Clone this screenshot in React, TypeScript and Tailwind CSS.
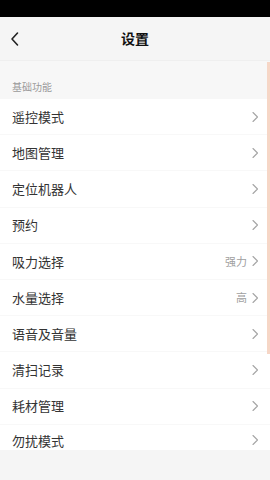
import React from "react";

const rows: { label: string; value?: string }[] = [
  { label: "遥控模式" },
  { label: "地图管理" },
  { label: "定位机器人" },
  { label: "预约" },
  { label: "吸力选择", value: "强力" },
  { label: "水量选择", value: "高" },
  { label: "语音及音量" },
  { label: "清扫记录" },
  { label: "耗材管理" },
  { label: "勿扰模式" },
];

function Chevron() {
  return (
    <svg width="8" height="12" viewBox="0 0 8 12" fill="none">
      <path d="M2 1.5 L6.5 6 L2 10.5" stroke="#a5a5a5" strokeWidth="1.1" strokeLinecap="round" strokeLinejoin="round" />
    </svg>
  );
}

export default function App() {
  return (
    <div
      className="w-[270px] h-[480px] flex flex-col bg-[#f5f5f5] overflow-hidden"
      style={{ fontFamily: '"Noto Sans CJK SC", "Noto Sans", sans-serif' }}
    >
      <div className="h-[17px] bg-black shrink-0" />
      <div className="h-[44px] shrink-0 flex items-center relative bg-[#f5f5f5] border-b border-[#efefef]">
        <div className="pl-[9px] flex items-center">
          <svg width="12" height="16" viewBox="0 0 12 16" fill="none">
            <path d="M8.5 2 L3 8 L8.5 14" stroke="#222" strokeWidth="1.6" strokeLinecap="round" strokeLinejoin="round" />
          </svg>
        </div>
        <div className="absolute inset-0 flex items-center justify-center text-[14px] font-bold text-[#111]">设置</div>
      </div>
      <div className="h-[389px] shrink-0 relative overflow-hidden bg-[#f7f7f7] flex flex-col">
        <div className="h-[38px] shrink-0 flex items-end pb-[5px] pl-[12px] text-[10px] text-[#9a9a9a]">基础功能</div>
        <div className="bg-white flex-1 flex flex-col">
          {rows.map((r, i) =>
            i === rows.length - 1 ? (
              <div key={r.label} className="flex-1 flex items-start pt-[7px] pl-[12px] pr-[11px]">
                <span className="flex-1 text-[13px] leading-[17px] text-[#333]">{r.label}</span>
                <span className="h-[17px] flex items-center">
                  <Chevron />
                </span>
              </div>
            ) : (
              <div
                key={r.label}
                className="h-[36.2px] shrink-0 flex items-center pl-[12px] pr-[11px] border-b border-[#f8f8f8]"
              >
                <span className="flex-1 text-[13px] text-[#333]">{r.label}</span>
                {r.value && <span className="text-[11px] text-[#a0a0a0] mr-[4px]">{r.value}</span>}
                <Chevron />
              </div>
            )
          )}
        </div>
        <div className="absolute right-0 top-[1px] w-[3px] h-[292px] bg-[#f6d6c6]" />
      </div>
      <div className="flex-1 bg-[#f5f5f5]" />
    </div>
  );
}
